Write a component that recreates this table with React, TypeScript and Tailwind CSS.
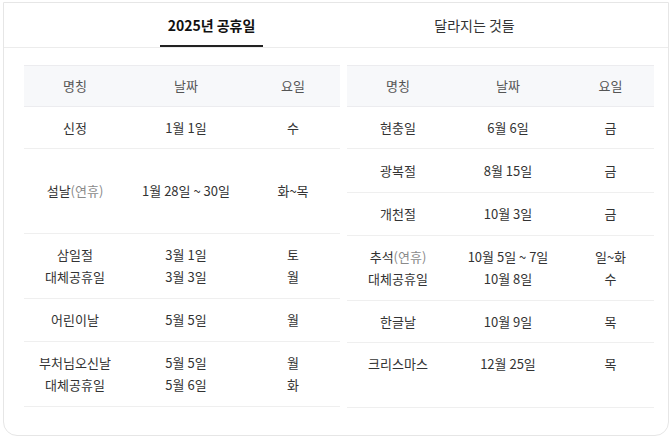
import React from 'react';

type Row = {
  h: string;
  name: React.ReactNode[];
  date: string[];
  day: string[];
};

const Soft = ({ children }: { children: React.ReactNode }) => (
  <span className="text-[#8a8a8a]">{children}</span>
);

const leftRows: Row[] = [
  { h: 'h-[42px]', name: ['신정'], date: ['1월 1일'], day: ['수'] },
  { h: 'h-[85px]', name: [<>설날<Soft>(연휴)</Soft></>], date: ['1월 28일 ~ 30일'], day: ['화~목'] },
  { h: 'h-[65px]', name: ['삼일절', '대체공휴일'], date: ['3월 1일', '3월 3일'], day: ['토', '월'] },
  { h: 'h-[43px]', name: ['어린이날'], date: ['5월 5일'], day: ['월'] },
  { h: 'h-[65px]', name: ['부처님오신날', '대체공휴일'], date: ['5월 5일', '5월 6일'], day: ['월', '화'] },
];

const rightRows: Row[] = [
  { h: 'h-[42px]', name: ['현충일'], date: ['6월 6일'], day: ['금'] },
  { h: 'h-[44px]', name: ['광복절'], date: ['8월 15일'], day: ['금'] },
  { h: 'h-[43px]', name: ['개천절'], date: ['10월 3일'], day: ['금'] },
  { h: 'h-[65px]', name: [<>추석<Soft>(연휴)</Soft></>, '대체공휴일'], date: ['10월 5일 ~ 7일', '10월 8일'], day: ['일~화', '수'] },
  { h: 'h-[42px]', name: ['한글날'], date: ['10월 9일'], day: ['목'] },
  { h: 'h-[65px]', name: ['크리스마스', '\u00a0'], date: ['12월 25일', '\u00a0'], day: ['목', '\u00a0'] },
];

function Cell({ lines }: { lines: React.ReactNode[] }) {
  return (
    <div className="flex flex-col items-center justify-center leading-[22px]">
      {lines.map((l, i) => (
        <div key={i} className="whitespace-nowrap">{l}</div>
      ))}
    </div>
  );
}

function HolidayTable({ rows, cols, width }: { rows: Row[]; cols: string; width: string }) {
  return (
    <div className={width}>
      <div className={`grid ${cols} h-[42px] items-center text-center bg-[#f7f8fa] border-y border-[#ececef] text-[#555]`}>
        <div>명칭</div>
        <div>날짜</div>
        <div>요일</div>
      </div>
      {rows.map((r, i) => (
        <div key={i} className={`grid ${cols} ${r.h} items-center text-center border-b border-[#efefef]`}>
          <Cell lines={r.name} />
          <Cell lines={r.date} />
          <Cell lines={r.day} />
        </div>
      ))}
    </div>
  );
}

export default function App() {
  return (
    <div className="w-[669px] h-[445px] bg-white pt-[2px] text-[13px] text-[#333]" style={{ fontFamily: '"Noto Sans CJK KR", "Noto Sans", sans-serif' }}>
      <div className="ml-[3px] w-[666px] h-[434px] border border-[#e6e6e6] rounded-b-[14px] bg-white">
        <div className="flex pl-[156px] gap-[160px] h-[45px] border-b border-[#ececec] text-[14px]">
          <div className="w-[103px] flex items-center justify-center border-b-2 border-[#222] font-bold text-[#111] pt-[2px]">
            2025년 공휴일
          </div>
          <div className="w-[103px] flex items-center justify-center text-[#333] pb-[0px]">
            달라지는 것들
          </div>
        </div>
        <div className="flex pl-[20px] pt-[17px] gap-[7px]">
          <HolidayTable rows={leftRows} cols="grid-cols-[102px_120px_94px]" width="w-[316px]" />
          <HolidayTable rows={rightRows} cols="grid-cols-[102px_118px_87px]" width="w-[307px]" />
        </div>
      </div>
    </div>
  );
}
